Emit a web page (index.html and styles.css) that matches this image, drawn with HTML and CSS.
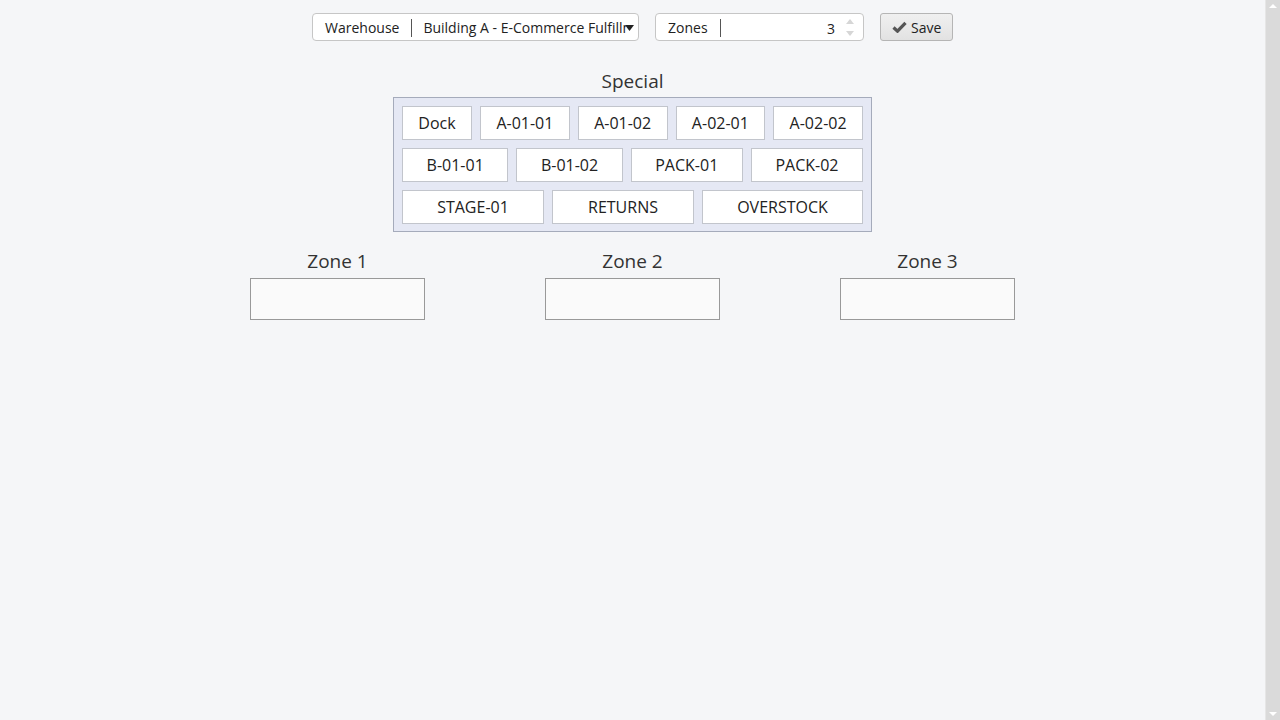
FILE: index.html
```
<!DOCTYPE html>
<html lang="en">
<head>
    <meta charset="UTF-8">
    <meta name="viewport" content="width=device-width, initial-scale=1.0">
    <title>Zone Planner</title>
    <link rel="stylesheet" href="styles.css">
</head>
<body>
    <div class="page">
        <div class="toolbar">
            <div class="field warehouse">
                <span class="field-label">Warehouse</span>
                <div class="field-value select">
                    <span class="select-text">Building A - E-Commerce Fulfillment Center</span>
                    <svg class="select-arrow" width="9" height="6" viewBox="0 0 9 6"><path d="M0 0 H9 L4.5 6 Z" fill="#222"/></svg>
                </div>
            </div>
            <div class="field zones">
                <span class="field-label">Zones</span>
                <span class="field-value number">3</span>
                <span class="spinner">
                    <span class="spin-up"></span>
                    <span class="spin-down"></span>
                </span>
            </div>
            <button class="save">
                <svg width="15" height="12" viewBox="0 0 15 12"><path d="M1.5 6.5 L5.5 10.2 L13.5 1.8" fill="none" stroke="#555" stroke-width="3.2"/></svg>
                Save
            </button>
        </div>

        <div class="special">
            <div class="section-title">Special</div>
            <div class="bin-box">
                <div class="bin-row">
                    <button class="bin">Dock</button>
                    <button class="bin">A-01-01</button>
                    <button class="bin">A-01-02</button>
                    <button class="bin">A-02-01</button>
                    <button class="bin">A-02-02</button>
                </div>
                <div class="bin-row">
                    <button class="bin">B-01-01</button>
                    <button class="bin">B-01-02</button>
                    <button class="bin">PACK-01</button>
                    <button class="bin">PACK-02</button>
                </div>
                <div class="bin-row">
                    <button class="bin wide">STAGE-01</button>
                    <button class="bin wide">RETURNS</button>
                    <button class="bin">OVERSTOCK</button>
                </div>
            </div>
        </div>

        <div class="zone-list">
            <div class="zone">
                <div class="section-title">Zone 1</div>
                <div class="zone-drop"></div>
            </div>
            <div class="zone">
                <div class="section-title">Zone 2</div>
                <div class="zone-drop"></div>
            </div>
            <div class="zone">
                <div class="section-title">Zone 3</div>
                <div class="zone-drop"></div>
            </div>
        </div>
    </div>

    <div class="scrollbar">
        <span class="scroll-up"></span>
        <span class="scroll-down"></span>
    </div>
</body>
</html>
```

FILE: styles.css
```
body {
    font-family: "Open Sans", Arial, sans-serif;
    background-color: #f5f6f8;
    color: #222;
    margin: 0;
}
.page {
    width: calc(100% - 15px);
    padding-top: 13px;
}
.toolbar {
    display: flex;
    justify-content: center;
    gap: 16px;
}
.field {
    display: flex;
    align-items: center;
    height: 28px;
    padding-top: 2px;
    box-sizing: border-box;
    background: #fff;
    border: 1px solid #c6c6c6;
    border-radius: 4px;
    font-size: 14px;
}
.warehouse { width: 327px; }
.zones { width: 209px; }
.field-label {
    padding: 0 12px 0 12px;
    line-height: 18px;
    border-right: 1px solid #555;
}
.field-value {
    flex: 1;
    min-width: 0;
}
.select {
    position: relative;
    padding-left: 11px;
    white-space: nowrap;
    line-height: 20px;
}
.select-text { display: block; overflow: hidden; margin-right: 12px; }
.select-arrow {
    position: absolute;
    right: 4px;
    top: 7px;
}
.number {
    text-align: right;
    padding-right: 2px;
}
.spinner {
    display: flex;
    flex-direction: column;
    gap: 7px;
    width: 26px;
    margin-top: -2px;
    align-items: center;
}
.spin-up, .spin-down {
    width: 0;
    height: 0;
    border-left: 4px solid transparent;
    border-right: 4px solid transparent;
}
.spin-up { border-bottom: 5px solid #d6d6d6; }
.spin-down { border-top: 5px solid #d6d6d6; }
.save {
    display: flex;
    align-items: center;
    gap: 4px;
    height: 28px;
    width: 73px;
    padding: 0 0 0 11px;
    font-family: inherit;
    font-size: 14px;
    color: #222;
    background: linear-gradient(#f0f0f0, #e2e2e2);
    border: 1px solid #b5b5b5;
    border-radius: 3px;
    cursor: pointer;
}
.section-title {
    text-align: center;
    font-size: 19px;
    line-height: 26px;
    color: #333;
}
.special {
    margin-top: 27px;
    display: flex;
    flex-direction: column;
    align-items: center;
}
.special .section-title { margin-bottom: 3px; }
.bin-box {
    width: 479px;
    box-sizing: border-box;
    padding: 8px 8px 7px;
    background: #e5e8f4;
    border: 1px solid #a5abbb;
    display: flex;
    flex-direction: column;
    gap: 8px;
}
.bin-row {
    display: flex;
    gap: 8px;
}
.bin {
    flex: 1 1 auto;
    height: 34px;
    padding: 0 15px;
    font-family: inherit;
    font-size: 16px;
    color: #222;
    background: #fff;
    border: 1px solid #c2c5cc;
    cursor: pointer;
}
.bin.wide { flex: 0 0 142px; }
.zone-list {
    margin-top: 16px;
    display: flex;
    justify-content: center;
    gap: 120px;
}
.zone-drop {
    margin-top: 4px;
    width: 175px;
    height: 42px;
    box-sizing: border-box;
    background: #fafafa;
    border: 1px solid #999;
}
.scrollbar {
    position: fixed;
    top: 0;
    right: 0;
    width: 15px;
    height: 100%;
    background: #dadada;
    border-left: 1px solid #e6e6e6;
    box-sizing: border-box;
}
.scroll-up, .scroll-down {
    position: absolute;
    left: 3px;
    width: 0;
    height: 0;
    border-left: 4px solid transparent;
    border-right: 4px solid transparent;
}
.scroll-up { top: 4px; border-bottom: 4px solid #fff; }
.scroll-down { bottom: 4px; border-top: 4px solid #fff; }
```
